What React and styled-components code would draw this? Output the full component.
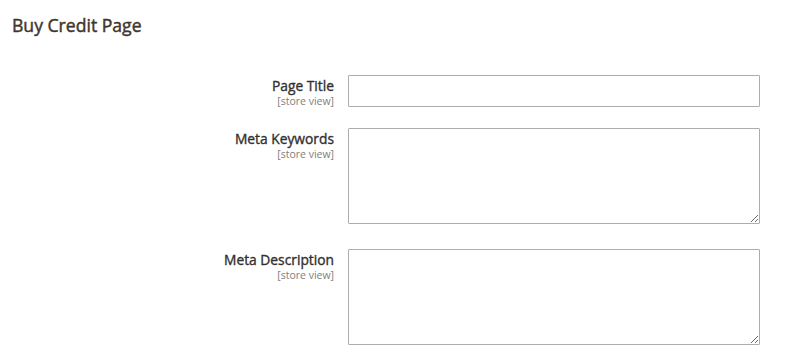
import React from 'react';
import styled, { createGlobalStyle } from 'styled-components';

const GlobalStyle = createGlobalStyle`
  html, body {
    margin: 0;
    padding: 0;
    background: #ffffff;
  }
  body {
    font-family: "Open Sans", "Liberation Sans", Arial, sans-serif;
    color: #303030;
  }
`;

const fields = [
  { id: 'page_title', label: 'Page Title', scope: '[store view]', type: 'input' },
  { id: 'meta_keywords', label: 'Meta Keywords', scope: '[store view]', type: 'textarea' },
  { id: 'meta_description', label: 'Meta Description', scope: '[store view]', type: 'textarea' },
];

const App = () => {
  return (
    <>
      <GlobalStyle />
      <Page>
        <Legend>Buy Credit Page</Legend>
        <Fieldset>
          {fields.map((field) => (
            <FieldRow key={field.id} $tall={field.type === 'textarea'}>
              <LabelBox htmlFor={field.id}>
                <LabelText>{field.label}</LabelText>
                <Scope>{field.scope}</Scope>
              </LabelBox>
              <Control>
                {field.type === 'input' ? (
                  <TextInput id={field.id} type="text" />
                ) : (
                  <TextArea id={field.id} />
                )}
              </Control>
            </FieldRow>
          ))}
        </Fieldset>
      </Page>
    </>
  );
};

export default App;

const Page = styled.div`
  padding: 13px 0 0 12px;
  width: 800px;
  box-sizing: border-box;
`;

// semibold is not installed, so regular + a thin stroke stands in for it
const Legend = styled.h2`
  margin: 0;
  height: 24px;
  font-size: 17.6px;
  font-weight: 400;
  line-height: 24px;
  color: #41362f;
  -webkit-text-stroke: 0.45px #41362f;
`;

const Fieldset = styled.div`
  display: flex;
  flex-direction: column;
  padding-top: 38px;
`;

const FieldRow = styled.div`
  display: grid;
  grid-template-columns: 322px 412px;
  column-gap: 14px;
  align-items: start;
  margin-bottom: ${(p) => (p.$tall ? '25px' : '21px')};
`;

const LabelBox = styled.label`
  display: flex;
  flex-direction: column;
  align-items: flex-end;
  text-align: right;
  padding-top: 3px;
`;

const LabelText = styled.span`
  font-size: 13.8px;
  font-weight: 400;
  line-height: 15px;
  color: #303030;
  -webkit-text-stroke: 0.35px #303030;
`;

const Scope = styled.span`
  font-size: 10.5px;
  line-height: 11px;
  margin-top: 3px;
  color: #808080;
`;

const Control = styled.div`
  display: flex;
`;

const TextInput = styled.input`
  width: 100%;
  height: 32px;
  box-sizing: border-box;
  border: 1px solid #adadad;
  border-radius: 1px;
  margin: 0;
  padding: 0 10px;
  font-family: inherit;
  font-size: 14px;
  outline: none;
`;

const TextArea = styled.textarea`
  width: 100%;
  height: 96px;
  box-sizing: border-box;
  border: 1px solid #adadad;
  border-radius: 1px;
  margin: 0;
  padding: 8px 10px;
  font-family: inherit;
  font-size: 14px;
  outline: none;
  resize: vertical;
`;
